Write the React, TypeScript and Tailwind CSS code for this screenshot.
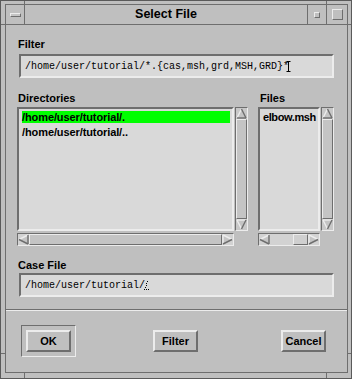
import React from "react";

const sans = { fontFamily: '"Liberation Sans", Arial, sans-serif' };
const mono = { fontFamily: '"Liberation Mono", "Courier New", monospace' };

function Arrow({ dir }: { dir: "up" | "down" | "left" | "right" }) {
  const L = "#ececec";
  const D = "#6e6e6e";
  let poly = "";
  let lines: [number, number, number, number, string][] = [];
  if (dir === "up") {
    poly = "5.5,1 1,10 10,10";
    lines = [
      [5.5, 1, 1, 10, L],
      [5.5, 1, 10, 10, D],
      [1, 10, 10, 10, D],
    ];
  } else if (dir === "down") {
    poly = "1,1 10,1 5.5,10";
    lines = [
      [1, 1, 10, 1, L],
      [1, 1, 5.5, 10, L],
      [10, 1, 5.5, 10, D],
    ];
  } else if (dir === "left") {
    poly = "1,5.5 10,1 10,10";
    lines = [
      [1, 5.5, 10, 1, L],
      [1, 5.5, 10, 10, D],
      [10, 1, 10, 10, D],
    ];
  } else {
    poly = "1,1 1,10 10,5.5";
    lines = [
      [1, 1, 1, 10, L],
      [1, 1, 10, 5.5, L],
      [1, 10, 10, 5.5, D],
    ];
  }
  return (
    <svg width="11" height="11" viewBox="0 0 11 11" className="block shrink-0">
      <polygon points={poly} fill="#c4c4c4" />
      {lines.map((l, i) => (
        <line key={i} x1={l[0]} y1={l[1]} x2={l[2]} y2={l[3]} stroke={l[4]} strokeWidth="1.4" />
      ))}
    </svg>
  );
}

function VScroll() {
  return (
    <div className="w-[13px] h-full border border-t-[#6e6e6e] border-l-[#6e6e6e] border-b-[#ececec] border-r-[#ececec] bg-[#c8c8c8] flex flex-col items-center">
      <Arrow dir="up" />
      <div className="flex-1 w-full border border-t-[#ececec] border-l-[#ececec] border-b-[#6e6e6e] border-r-[#6e6e6e] bg-[#c4c4c4]" />
      <Arrow dir="down" />
    </div>
  );
}

function HScroll({ small }: { small?: boolean }) {
  return (
    <div className="h-[13px] w-full border border-t-[#6e6e6e] border-l-[#6e6e6e] border-b-[#ececec] border-r-[#ececec] bg-[#d2d2d2] flex items-center">
      <Arrow dir="left" />
      {small ? (
        <>
          <div className="flex-1" />
          <div className="w-[15px] h-full border border-t-[#ececec] border-l-[#ececec] border-b-[#6e6e6e] border-r-[#6e6e6e] bg-[#cfcfcf]" />
        </>
      ) : (
        <div className="flex-1 h-full border border-t-[#ececec] border-l-[#ececec] border-b-[#6e6e6e] border-r-[#6e6e6e] bg-[#c4c4c4]" />
      )}
      <Arrow dir="right" />
    </div>
  );
}

function Button({ label }: { label: string }) {
  return (
    <div
      className="w-[45px] h-[22px] border-2 border-t-[#ececec] border-l-[#ececec] border-b-[#6e6e6e] border-r-[#6e6e6e] bg-[#bfbfbf] flex items-center justify-center text-[11px] font-bold text-black"
      style={sans}
    >
      {label}
    </div>
  );
}

export default function App() {
  return (
    <div
      className="relative w-[352px] h-[379px] overflow-hidden bg-[#bfbfbf] border border-[#5a5a5a] pl-[4px] pt-[3px] pr-[3px] pb-[5px] text-black"
      style={sans}
    >
      {/* frame resize ticks */}
      <div className="absolute left-[23px] top-0 w-px h-[3px] bg-[#6e6e6e]" />
      <div className="absolute left-[325px] top-0 w-px h-[3px] bg-[#6e6e6e]" />
      <div className="absolute left-[23px] bottom-0 w-px h-[5px] bg-[#6e6e6e]" />
      <div className="absolute left-[325px] bottom-0 w-px h-[5px] bg-[#6e6e6e]" />
      <div className="absolute left-0 top-[23px] w-[4px] h-px bg-[#6e6e6e]" />
      <div className="absolute right-0 top-[23px] w-[3px] h-px bg-[#6e6e6e]" />
      <div className="absolute left-0 top-[352px] w-[4px] h-px bg-[#6e6e6e]" />
      <div className="absolute right-0 top-[352px] w-[3px] h-px bg-[#6e6e6e]" />

      <div className="w-full h-full border border-[#6e6e6e] flex flex-col">
        {/* title bar */}
        <div className="h-[20px] flex border-b border-[#6e6e6e] shrink-0">
          <div className="w-[19px] border-r border-[#6e6e6e] flex items-center justify-center">
            <div className="w-[11px] h-[4px] border border-t-[#ececec] border-l-[#ececec] border-b-[#6e6e6e] border-r-[#6e6e6e] bg-[#c4c4c4]" />
          </div>
          <div className="flex-1 border-r border-[#6e6e6e] flex items-center justify-center text-[12.5px] font-bold leading-none">
            Select File
          </div>
          <div className="w-[19px] border-r border-[#6e6e6e] flex items-center justify-center">
            <div className="w-[6px] h-[6px] border border-t-[#ececec] border-l-[#ececec] border-b-[#6e6e6e] border-r-[#6e6e6e]" />
          </div>
          <div className="w-[20px] flex items-center justify-center">
            <div className="w-[11px] h-[11px] border border-t-[#ececec] border-l-[#ececec] border-b-[#6e6e6e] border-r-[#6e6e6e]" />
          </div>
        </div>

        {/* body */}
        <div className="flex flex-col pl-[11px] pr-[13px]">
          <div className="mt-[13px] ml-[1px] text-[11px] leading-[13px] font-bold">Filter</div>
          <div
            className="mt-[3px] ml-[2px] h-[24px] border-2 border-t-[#6e6e6e] border-l-[#6e6e6e] border-b-[#ececec] border-r-[#ececec] bg-[#d9d9d9] flex items-center pl-[4px] text-[10px] whitespace-nowrap"
            style={mono}
          >
            <span>/home/user/tutorial/*.{"{"}cas,msh,grd,MSH,GRD{"}"}*</span>
            <svg width="5" height="11" viewBox="0 0 5 11" className="-ml-[3px] block">
              <line x1="2.5" y1="0" x2="2.5" y2="11" stroke="#000" strokeWidth="1" />
              <line x1="0.5" y1="0.5" x2="4.5" y2="0.5" stroke="#000" strokeWidth="1" />
              <line x1="0.5" y1="10.5" x2="4.5" y2="10.5" stroke="#000" strokeWidth="1" />
            </svg>
          </div>

          <div className="mt-[14px] flex">
            {/* Directories */}
            <div className="w-[231px] flex flex-col">
              <div className="ml-[1px] text-[11px] leading-[13px] font-bold">Directories</div>
              <div className="mt-[2px] h-[139px] grid grid-cols-[217px_13px] grid-rows-[124px_13px] gap-x-[1px] gap-y-[2px]">
                <div className="border-2 border-t-[#6e6e6e] border-l-[#6e6e6e] border-b-[#ececec] border-r-[#ececec] bg-[#d9d9d9] pl-[1px] pr-[1px] pt-[2px] flex flex-col gap-[3px] text-[11px] font-bold leading-[12px] tracking-[-0.1px]">
                  <div className="h-[12px] bg-[#00ff00] ml-[2px] mr-[1px]">/home/user/tutorial/.</div>
                  <div className="h-[12px] ml-[2px]">/home/user/tutorial/..</div>
                </div>
                <VScroll />
                <HScroll />
                <div />
              </div>
            </div>

            {/* Files */}
            <div className="ml-[10px] w-[76px] flex flex-col">
              <div className="ml-[2px] text-[11px] leading-[13px] font-bold">Files</div>
              <div className="mt-[2px] h-[139px] grid grid-cols-[62px_13px] grid-rows-[124px_13px] gap-x-[1px] gap-y-[2px]">
                <div className="border-2 border-t-[#6e6e6e] border-l-[#6e6e6e] border-b-[#ececec] border-r-[#ececec] bg-[#d9d9d9] pl-[1px] pt-[2px] text-[11px] font-bold leading-[12px] tracking-[-0.4px] overflow-hidden whitespace-nowrap">
                  <div className="h-[12px] ml-[2px]">elbow.msh</div>
                </div>
                <VScroll />
                <HScroll small />
                <div />
              </div>
            </div>
          </div>

          <div className="mt-[13px] ml-[1px] text-[11px] leading-[13px] font-bold">Case File</div>
          <div
            className="mt-[1px] ml-[2px] h-[24px] border-2 border-t-[#6e6e6e] border-l-[#6e6e6e] border-b-[#ececec] border-r-[#ececec] bg-[#d9d9d9] flex items-center pl-[4px] text-[10px] whitespace-nowrap"
            style={mono}
          >
            <span>/home/user/tutorial/</span>
            <svg width="6" height="11" viewBox="0 0 6 11" className="block -ml-[1px]">
              <rect x="3" y="1" width="1" height="1" fill="#000" />
              <rect x="2" y="3" width="1" height="1" fill="#000" />
              <rect x="2" y="5" width="1" height="1" fill="#000" />
              <rect x="1" y="7" width="1" height="1" fill="#000" />
              <rect x="0" y="9" width="1" height="1" fill="#000" />
              <rect x="2" y="9" width="1" height="1" fill="#000" />
              <rect x="4" y="9" width="1" height="1" fill="#000" />
            </svg>
          </div>
        </div>

        {/* separator */}
        <div className="mt-[12px] h-[2px] border-t border-t-[#6e6e6e] border-b border-b-[#ececec]" />

        {/* buttons */}
        <div className="mt-[14px] flex items-start pl-[15px]">
          <div className="p-[4px] border border-t-[#6e6e6e] border-l-[#6e6e6e] border-b-[#ececec] border-r-[#ececec]">
            <Button label="OK" />
          </div>
          <div className="ml-[77px] mt-[5px]">
            <Button label="Filter" />
          </div>
          <div className="ml-[83px] mt-[5px]">
            <Button label="Cancel" />
          </div>
        </div>
      </div>
    </div>
  );
}
